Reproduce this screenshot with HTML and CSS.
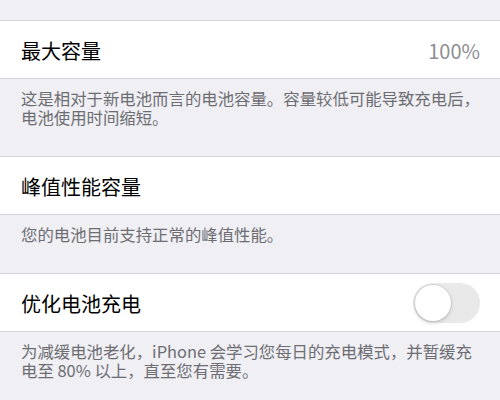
FILE: index.html
```html
<!DOCTYPE html>
<html lang="zh-CN">
<head>
    <meta charset="UTF-8">
    <meta name="viewport" content="width=device-width, initial-scale=1.0">
    <title>电池健康</title>
    <link rel="stylesheet" href="styles.css">
</head>
<body>
    <div class="top-gap"></div>

    <div class="cell">
        <span class="cell-title">最大容量</span>
        <span class="cell-value">100%</span>
    </div>
    <p class="footer">这是相对于新电池而言的电池容量。容量较低可能导致充电后，<br>电池使用时间缩短。</p>

    <div class="cell">
        <span class="cell-title">峰值性能容量</span>
    </div>
    <p class="footer">您的电池目前支持正常的峰值性能。</p>

    <div class="cell">
        <span class="cell-title">优化电池充电</span>
        <div class="switch">
            <div class="knob"></div>
        </div>
    </div>
    <p class="footer">为减缓电池老化，iPhone 会学习您每日的充电模式，并暂缓充<br>电至 80% 以上，直至您有需要。</p>
</body>
</html>
```

FILE: styles.css
```css
body {
    margin: 0;
    background-color: #efeff4;
    font-family: "Noto Sans CJK SC", "Noto Sans", sans-serif;
    overflow: hidden;
}
.top-gap {
    height: 20px;
}
.cell {
    display: flex;
    align-items: center;
    justify-content: space-between;
    height: 57px;
    padding: 0 20px 0 21px;
    background: #fff;
    border-top: 1px solid #d6d6db;
    border-bottom: 1px solid #d6d6db;
}
.cell-title {
    font-size: 20px;
    color: #000;
    padding-top: 2px;
}
.cell-value {
    font-size: 20px;
    color: #8e8e93;
    padding-top: 2px;
}
.footer {
    margin: 0;
    padding: 10px 12px 29px 21px;
    font-size: 16.4px;
    line-height: 19px;
    color: #6d6d72;
    white-space: nowrap;
}
.switch {
    display: flex;
    align-items: center;
    width: 67px;
    height: 40px;
    padding: 0 2px;
    box-sizing: border-box;
    border-radius: 20px;
    background: #e9e9ea;
}
.knob {
    width: 36px;
    height: 36px;
    border-radius: 50%;
    background: #fff;
    box-shadow: 0 0 0 1px rgba(0, 0, 0, 0.07), 0 2px 4px rgba(0, 0, 0, 0.15);
}
```
